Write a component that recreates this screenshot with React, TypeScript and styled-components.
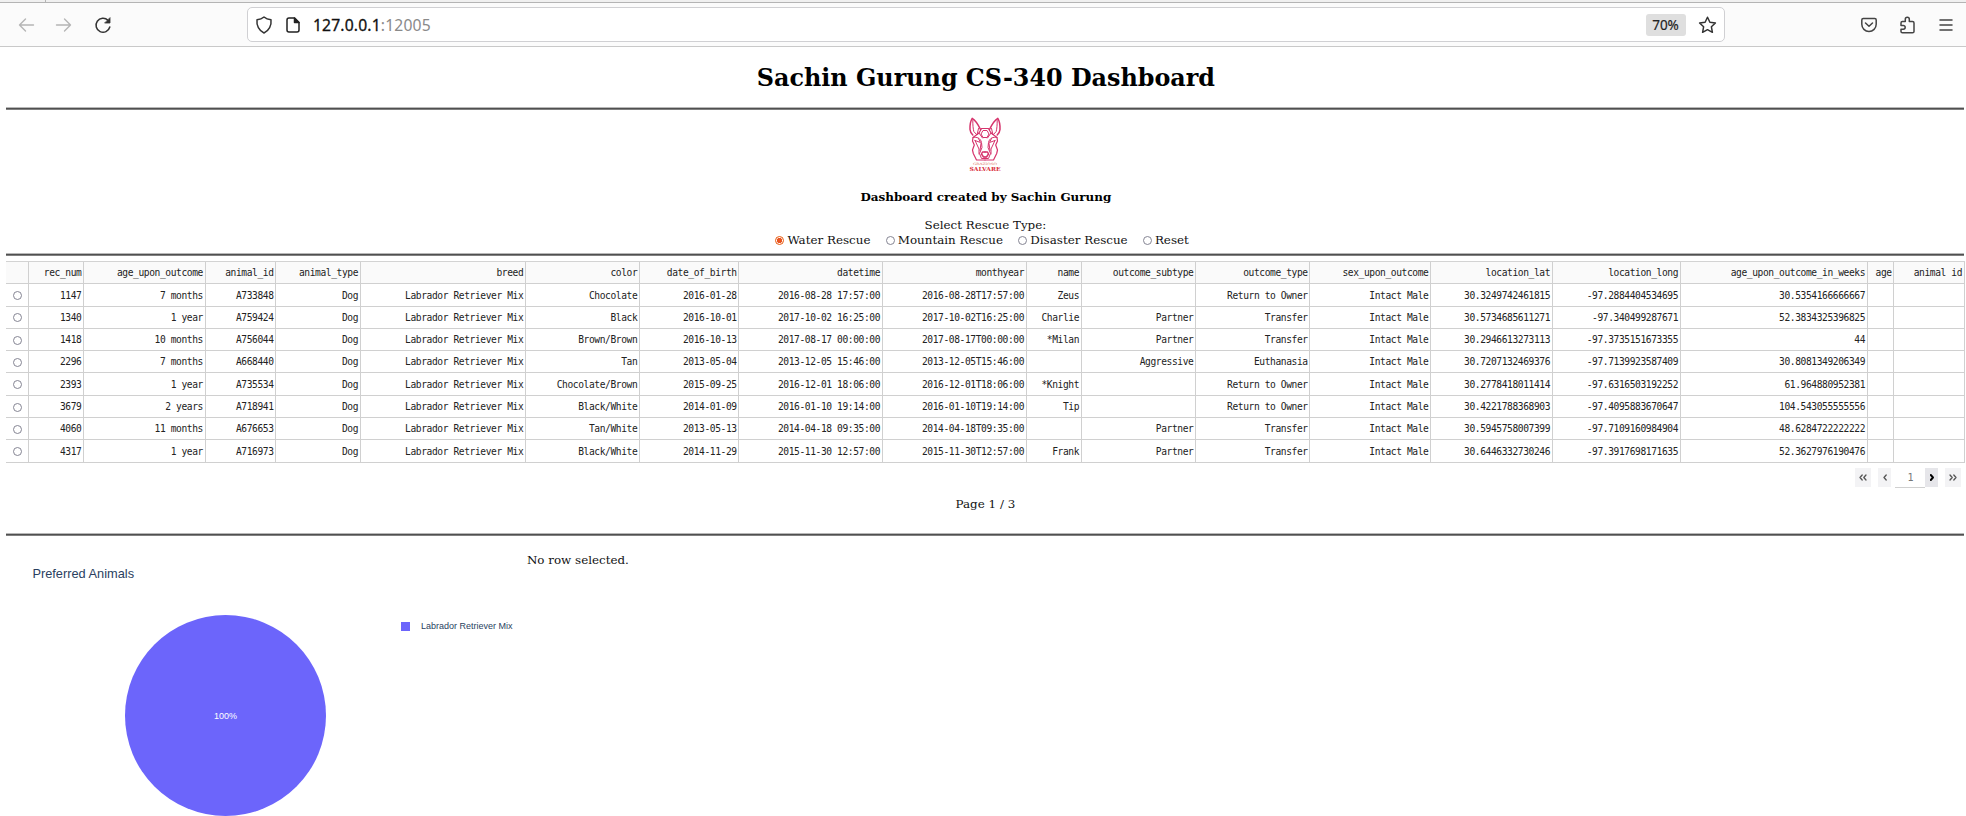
import React from "react";
import styled, { createGlobalStyle } from "styled-components";

const GlobalStyle = createGlobalStyle`
  * { box-sizing: border-box; }
  html, body { margin: 0; padding: 0; background: #fff; }
  body { height: 816px; overflow: hidden; }
`;

const Window = styled.div`
  width: 1966px;
  height: 816px;
  overflow: hidden;
  display: flex;
  flex-direction: column;
  color: #111;
  font-family: "DejaVu Serif", serif;
  font-size: 11.9px;
`;

const TabStrip = styled.div`
  height: 3px;
  flex: none;
  display: flex;
  background: #f0f0f0;
  border-bottom: 1px solid #b4b4b4;
`;

const TabEdge = styled.div<{ $width: number }>`
  width: ${(p) => p.$width}px;
  border-right: 1px solid #b4b4b4;
`;

const Toolbar = styled.div`
  height: 44px;
  flex: none;
  display: flex;
  align-items: center;
  padding: 0 11px 0 16.5px;
  background: #fbfbfb;
  border-bottom: 1px solid #c9c9c9;
`;

const NavButtons = styled.div`
  width: 230px;
  display: flex;
  align-items: center;
  gap: 20.5px;
`;

const Svg = styled.svg`
  display: block;
  flex: none;
  fill: none;
  stroke-linecap: round;
  stroke-linejoin: round;
`;

const AddressBar = styled.div`
  width: 1478px;
  height: 35px;
  display: flex;
  align-items: center;
  padding: 0 7px;
  background: #fff;
  border: 1.5px solid #d0d0d3;
  border-radius: 5px;
`;

const PageIcon = styled(Svg)`
  margin-left: 12.5px;
`;

const Address = styled.div`
  flex: 1;
  margin-left: 12px;
  font: 15.7px/20px "Noto Sans", "Open Sans", sans-serif;
  letter-spacing: 0.15px;
  color: #8a8a8a;
`;

const Host = styled.span`
  color: #111;
  -webkit-text-stroke: 0.3px #111;
`;

const ZoomBadge = styled.div`
  width: 40px;
  height: 22px;
  margin-right: 12px;
  border-radius: 3px;
  background: #dfdfdf;
  color: #222;
  text-align: center;
  font: 13.5px/22px "Noto Sans", "Open Sans", sans-serif;
  -webkit-text-stroke: 0.2px #222;
`;

const ToolbarActions = styled.div`
  margin-left: auto;
  display: flex;
  align-items: center;
  gap: 21px;
`;

const Page = styled.main`
  flex: 1;
  width: 1958px;
  margin-left: 6.4px;
  display: flex;
  flex-direction: column;
`;

const Rule = styled.div`
  height: 3px;
  flex: none;
  background: #505050;
  border-top: 1px solid #b8b8b8;
  border-bottom: 1px solid #808080;
`;

const Title = styled.h1`
  margin: 0;
  height: 60px;
  padding: 1px 0 0 1px;
  text-align: center;
  font-size: 23.85px;
  line-height: 60px;
  color: #000;
`;

const LogoBox = styled.div`
  height: 71px;
  padding: 7px 0 0 0;
  display: flex;
  justify-content: center;
`;

const Subtitle = styled.h5`
  margin: 0;
  height: 32px;
  padding-left: 1px;
  text-align: center;
  font-size: 11.95px;
  line-height: 32px;
  color: #000;
`;

const FilterTitle = styled.div`
  height: 15px;
  margin-top: 5px;
  text-align: center;
  line-height: 15px;
`;

const FilterRow = styled.div`
  height: 20px;
  display: flex;
  justify-content: center;
  padding-right: 6.5px;
  gap: 15.3px;
  line-height: 15px;
`;

const FilterLabel = styled.label`
  height: 15px;
  display: flex;
  align-items: center;
  gap: 3px;
`;

const RadioDot = styled.span<{ $on?: boolean; $size: number }>`
  width: ${(p) => p.$size}px;
  height: ${(p) => p.$size}px;
  flex: none;
  border-radius: 50%;
  border: 1px solid ${(p) => (p.$on ? "#e8590c" : "#858593")};
  background: ${(p) => (p.$on ? "radial-gradient(circle, #e95420 0 2.3px, #fff 3px)" : "#fff")};
`;

const Grid = styled.div`
  width: 1958.5px;
  margin-top: 5px;
  border-top: 1px solid #d3d3d3;
  font: 9.6px/12px "DejaVu Sans Mono", monospace;
  letter-spacing: -0.4px;
  color: #222;
`;

const Row = styled.div<{ $head?: boolean }>`
  height: 22.3px;
  display: grid;
  grid-template-columns:
    22.5px 55.3px 121.4px 70.7px 84.5px 165.3px 114px 99.3px 143.4px 144px 55px
    114.4px 114.3px 120.7px 121.6px 128px 187px 26.7px 70.4px;
  background: ${(p) => (p.$head ? "#fafafa" : "#fff")};
`;

const Cell = styled.div<{ $center?: boolean }>`
  display: flex;
  align-items: center;
  justify-content: ${(p) => (p.$center ? "center" : "flex-end")};
  padding-top: 1.2px;
  padding-right: ${(p) => (p.$center ? 0 : 1.7)}px;
  border-right: 1px solid #d0d0d0;
  border-bottom: 1px solid #d0d0d0;
  white-space: pre;
`;

const Pager = styled.div`
  height: 20px;
  margin-top: 5px;
  padding-right: 3px;
  display: flex;
  justify-content: flex-end;
`;

const PagerButton = styled.div<{ $w: number; $active?: boolean; $gap: number }>`
  width: ${(p) => p.$w}px;
  height: 19px;
  margin-right: ${(p) => p.$gap}px;
  display: flex;
  align-items: center;
  justify-content: center;
  background: ${(p) => (p.$active ? "#e6e6ea" : "#f3f3f5")};
  color: ${(p) => (p.$active ? "#000" : "#555")};
`;

const PagerInput = styled.div`
  width: 30px;
  height: 20px;
  border-bottom: 1px solid #d0d0d0;
  text-align: center;
  font: 10px/20px "DejaVu Sans Mono", monospace;
  color: #777;
`;

const PageCount = styled.div`
  height: 45px;
  padding-top: 9.5px;
  text-align: center;
  line-height: 15px;
`;

const Panels = styled.div`
  flex: 1;
  display: flex;
`;

const ChartPanel = styled.section`
  width: 520.5px;
  color: #2a3f5f;
  font-family: "Liberation Sans", Arial, sans-serif;
`;

const ChartTitle = styled.div`
  padding: 30px 0 1px 26px;
  font-size: 12.8px;
  line-height: 15px;
  white-space: nowrap;
`;

const ChartBody = styled.div`
  display: flex;
  padding: 33.5px 0 0 118.5px;
`;

const Pie = styled.div`
  width: 201px;
  height: 201px;
  flex: none;
  display: flex;
  align-items: center;
  justify-content: center;
  border-radius: 50%;
  background: #6c65fb;
  color: #fff;
  font-size: 9px;
`;

const Legend = styled.div`
  height: 12px;
  margin: 5px 0 0 75.5px;
  display: flex;
  align-items: center;
  gap: 10.5px;
  white-space: nowrap;
  font-size: 9px;
  line-height: 12px;
`;

const Swatch = styled.span`
  width: 9px;
  height: 9px;
  background: #6c65fb;
`;

const MapPanel = styled.section`
  padding-top: 17px;
  line-height: 15px;
`;

const columns = [
  "rec_num", "age_upon_outcome", "animal_id", "animal_type", "breed", "color",
  "date_of_birth", "datetime", "monthyear", "name", "outcome_subtype",
  "outcome_type", "sex_upon_outcome", "location_lat", "location_long",
  "age_upon_outcome_in_weeks", "age", "animal id",
];

const dog = ["Dog", "Labrador Retriever Mix"];
const records: string[][] = [
  ["1147", "7 months", "A733848", ...dog, "Chocolate", "2016-01-28", "2016-08-28 17:57:00", "2016-08-28T17:57:00", "Zeus", "", "Return to Owner", "Intact Male", "30.3249742461815", "-97.2884404534695", "30.5354166666667", "", ""],
  ["1340", "1 year", "A759424", ...dog, "Black", "2016-10-01", "2017-10-02 16:25:00", "2017-10-02T16:25:00", "Charlie", "Partner", "Transfer", "Intact Male", "30.5734685611271", "-97.340499287671", "52.3834325396825", "", ""],
  ["1418", "10 months", "A756044", ...dog, "Brown/Brown", "2016-10-13", "2017-08-17 00:00:00", "2017-08-17T00:00:00", "*Milan", "Partner", "Transfer", "Intact Male", "30.2946613273113", "-97.3735151673355", "44", "", ""],
  ["2296", "7 months", "A668440", ...dog, "Tan", "2013-05-04", "2013-12-05 15:46:00", "2013-12-05T15:46:00", "", "Aggressive", "Euthanasia", "Intact Male", "30.7207132469376", "-97.7139923587409", "30.8081349206349", "", ""],
  ["2393", "1 year", "A735534", ...dog, "Chocolate/Brown", "2015-09-25", "2016-12-01 18:06:00", "2016-12-01T18:06:00", "*Knight", "", "Return to Owner", "Intact Male", "30.2778418011414", "-97.6316503192252", "61.964880952381", "", ""],
  ["3679", "2 years", "A718941", ...dog, "Black/White", "2014-01-09", "2016-01-10 19:14:00", "2016-01-10T19:14:00", "Tip", "", "Return to Owner", "Intact Male", "30.4221788368903", "-97.4095883670647", "104.543055555556", "", ""],
  ["4060", "11 months", "A676653", ...dog, "Tan/White", "2013-05-13", "2014-04-18 09:35:00", "2014-04-18T09:35:00", "", "Partner", "Transfer", "Intact Male", "30.5945758007399", "-97.7109160984904", "48.6284722222222", "", ""],
  ["4317", "1 year", "A716973", ...dog, "Black/White", "2014-11-29", "2015-11-30 12:57:00", "2015-11-30T12:57:00", "Frank", "Partner", "Transfer", "Intact Male", "30.6446332730246", "-97.3917698171635", "52.3627976190476", "", ""],
];

const filters = ["Water Rescue", "Mountain Rescue", "Disaster Rescue", "Reset"];

const Chevrons = ({ flip, double, bold }: { flip?: boolean; double?: boolean; bold?: boolean }) => (
  <Svg
    width={double ? 8 : 4}
    height="7"
    viewBox={double ? "0 0 8 7" : "0 0 4 7"}
    stroke="currentColor"
    strokeWidth={bold ? 1.9 : 1.3}
    transform={flip ? "scale(-1 1)" : undefined}
  >
    <path d="M3.2 1 1 3.5l2.2 2.5" />
    {double && <path d="M7 1 4.8 3.5 7 6" />}
  </Svg>
);

const LogoHalf = () => (
  <>
    <path d="M12.500 12.500C10 7 7 3 4.200 1.300 2.500 4 1.800 8 2 12.500c.2 2.500 1.200 4 2.800 5.500" strokeWidth="1.5" />
    <path d="M4.800 3.500c0 5 .3 8 1 11l3.200 3.500 1.500-6.500" />
    <path d="M17 11.500h-3.500L11 16l-6 4.500L4.500 24l1.800 4L4.500 33l.8 3.500L8.500 43H17" strokeWidth="1.2" />
    <path d="M17 13.500h-2L13 17l2 3.500h2M11 16l3.500 5" />
    <path d="M5 20.500c4-.8 7.500.5 8.500 5l.5 5-2.500 6 2 5H17" />
    <path d="M7 23.500l5.500 2-2-4M7 23.500 11 32v5M12 33.500l1-7" />
    <path d="M17 35h-2.500L13.500 37l2 3H17" strokeWidth="1.5" />
  </>
);

const Logo = () => (
  <Svg width="34" height="55" viewBox="0 0 34 55" stroke="#d6336c" strokeWidth="1">
    <LogoHalf />
    <g transform="matrix(-1 0 0 1 34 0)"><LogoHalf /></g>
    <text x="17" y="48" textAnchor="middle" fontFamily="DejaVu Serif" fontSize="3" textLength="24" lengthAdjust="spacingAndGlyphs" fill="#e07a6a" stroke="none">GRAZIOSO</text>
    <text x="17" y="53.500" textAnchor="middle" fontFamily="DejaVu Serif" fontWeight="bold" fontSize="5.600" textLength="31" lengthAdjust="spacingAndGlyphs" fill="#d92b3a" stroke="none">SALVARE</text>
  </Svg>
);

export default function App() {
  return (
    <Window>
      <GlobalStyle />
      <TabStrip><TabEdge $width={46} /></TabStrip>
      <Toolbar>
        <NavButtons>
          <Svg width="18" height="16" viewBox="0 0 18 16" stroke="#b5b5b5" strokeWidth="1.4">
            <path d="M16.500 8h-14M8.500 2 2.500 8l6 6" />
          </Svg>
          <Svg width="18" height="16" viewBox="0 0 18 16" stroke="#b5b5b5" strokeWidth="1.4">
            <path d="M1.500 8h14M9.500 2l6 6-6 6" />
          </Svg>
          <Svg width="18" height="18" viewBox="0 0 18 18" stroke="#333" strokeWidth="1.5">
            <path d="M15.800 11A7 7 0 1 1 14 4.300" />
            <path d="M16 2v5h-5z" fill="#333" strokeWidth=".8" />
          </Svg>
        </NavButtons>
        <AddressBar>
          <Svg width="18" height="18" viewBox="0 0 18 18" stroke="#333" strokeWidth="1.5">
            <path d="M9 1C7 2.700 4.500 3.500 2 3.800 1.300 9.500 4 14.800 9 17c5-2.200 7.700-7.500 7-13.200C13.500 3.500 11 2.700 9 1z" />
          </Svg>
          <PageIcon width="16" height="18" viewBox="0 0 16 18" stroke="#222" strokeWidth="1.5">
            <path d="M4 2h5.500L14 6.500V14a2 2 0 0 1-2 2H4a2 2 0 0 1-2-2V4a2 2 0 0 1 2-2z" />
            <path d="M9.500 2v4.500H14z" fill="#222" />
          </PageIcon>
          <Address><Host>127.0.0.1</Host>:12005</Address>
          <ZoomBadge>70%</ZoomBadge>
          <Svg width="19" height="18" viewBox="0 0 19 18" stroke="#333" strokeWidth="1.5">
            <path d="m9.500 1.200 2.400 5 5.500.8-4 3.800 1 5.500-4.900-2.600-4.900 2.600 1-5.500-4-3.800 5.500-.8z" />
          </Svg>
        </AddressBar>
        <ToolbarActions>
          <Svg width="18" height="16" viewBox="0 0 18 16" stroke="#444" strokeWidth="1.5">
            <path d="M3.300 1.500h11.400c.9 0 1.500.7 1.500 1.500v4.300a7.200 7.200 0 0 1-14.400 0V3c0-.8.6-1.500 1.500-1.500z" />
            <path d="M5.500 6 9 9.300 12.500 6" />
          </Svg>
          <Svg width="17" height="18" viewBox="0 0 17 18" stroke="#444" strokeWidth="1.500">
            <path d="M2 8V6.900c0-.8.6-1.400 1.400-1.400h2.900V3.200a2 2 0 0 1 4 0v2.300h3.200c.8 0 1.500.6 1.500 1.400v8.500c0 .8-.7 1.400-1.500 1.400H3.400c-.8 0-1.400-.6-1.400-1.400v-2.200h2.300a1.900 1.900 0 0 0 0-3.800H2z" />
          </Svg>
          <Svg width="18" height="14" viewBox="0 0 18 14" stroke="#444" strokeWidth="1.500">
            <path d="M3 2h12M3 7h12M3 12h12" />
          </Svg>
        </ToolbarActions>
      </Toolbar>

      <Page>
        <Title>Sachin Gurung CS-340 Dashboard</Title>
        <Rule />
        <LogoBox><Logo /></LogoBox>
        <Subtitle>Dashboard created by Sachin Gurung</Subtitle>
        <FilterTitle>Select Rescue Type:</FilterTitle>
        <FilterRow>
          {filters.map((name, i) => (
            <FilterLabel key={name}>
              <RadioDot $size={9} $on={i === 0} />
              {name}
            </FilterLabel>
          ))}
        </FilterRow>
        <Rule />

        <Grid>
          <Row $head>
            <Cell />
            {columns.map((c) => <Cell key={c}>{c}</Cell>)}
          </Row>
          {records.map((r) => (
            <Row key={r[0]}>
              <Cell $center><RadioDot $size={9} /></Cell>
              {r.map((v, i) => <Cell key={i}>{v}</Cell>)}
            </Row>
          ))}
        </Grid>

        <Pager>
          <PagerButton $w={16} $gap={7.5}><Chevrons double /></PagerButton>
          <PagerButton $w={12.5} $gap={4.5}><Chevrons /></PagerButton>
          <PagerInput>1</PagerInput>
          <PagerButton $w={12.5} $gap={7.5} $active><Chevrons flip bold /></PagerButton>
          <PagerButton $w={16} $gap={0}><Chevrons double flip /></PagerButton>
        </Pager>
        <PageCount>Page 1 / 3</PageCount>
        <Rule />

        <Panels>
          <ChartPanel>
            <ChartTitle>Preferred Animals</ChartTitle>
            <ChartBody>
              <Pie>100%</Pie>
              <Legend><Swatch />Labrador Retriever Mix</Legend>
            </ChartBody>
          </ChartPanel>
          <MapPanel>No row selected.</MapPanel>
        </Panels>
      </Page>
    </Window>
  );
}
